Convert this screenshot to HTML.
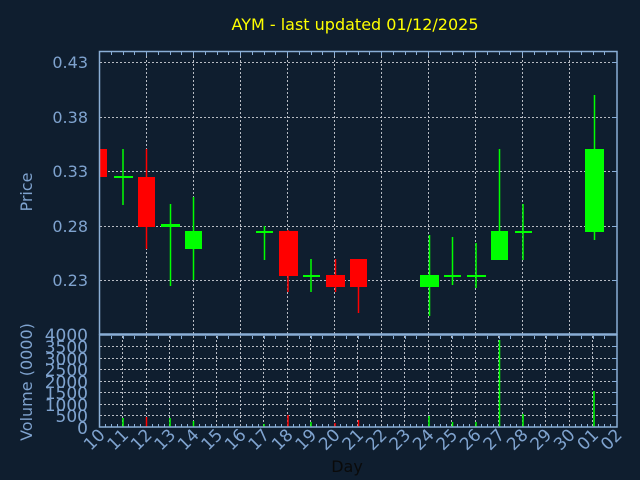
<!DOCTYPE html>
<html><head><meta charset="utf-8"><style>
html,body{margin:0;padding:0;background:#0f1e2f;}
svg{display:block;}
text{font-family:"DejaVu Sans","Liberation Sans",sans-serif;}
</style></head><body>
<svg width="640" height="480" viewBox="0 0 640 480" xmlns="http://www.w3.org/2000/svg">
<rect width="640" height="480" fill="#0f1e2f"/>
<text x="355" y="30" fill="#ffff00" font-size="16" text-anchor="middle">AYM - last updated 01/12/2025</text>

<g stroke="#b8bcc4" stroke-width="1" stroke-dasharray="2,2">
<line x1="100" y1="62.5" x2="617" y2="62.5"/>
<line x1="100" y1="117.5" x2="617" y2="117.5"/>
<line x1="100" y1="171.5" x2="617" y2="171.5"/>
<line x1="100" y1="226.5" x2="617" y2="226.5"/>
<line x1="100" y1="280.5" x2="617" y2="280.5"/>
<line x1="146.5" y1="52" x2="146.5" y2="334"/>
<line x1="193.5" y1="52" x2="193.5" y2="334"/>
<line x1="240.5" y1="52" x2="240.5" y2="334"/>
<line x1="287.5" y1="52" x2="287.5" y2="334"/>
<line x1="334.5" y1="52" x2="334.5" y2="334"/>
<line x1="381.5" y1="52" x2="381.5" y2="334"/>
<line x1="428.5" y1="52" x2="428.5" y2="334"/>
<line x1="475.5" y1="52" x2="475.5" y2="334"/>
<line x1="522.5" y1="52" x2="522.5" y2="334"/>
<line x1="569.5" y1="52" x2="569.5" y2="334"/>
<line x1="100" y1="346.5" x2="617" y2="346.5"/>
<line x1="100" y1="358.5" x2="617" y2="358.5"/>
<line x1="100" y1="369.5" x2="617" y2="369.5"/>
<line x1="100" y1="381.5" x2="617" y2="381.5"/>
<line x1="100" y1="392.5" x2="617" y2="392.5"/>
<line x1="100" y1="404.5" x2="617" y2="404.5"/>
<line x1="100" y1="415.5" x2="617" y2="415.5"/>
<line x1="122.5" y1="336" x2="122.5" y2="427"/>
<line x1="146.5" y1="336" x2="146.5" y2="427"/>
<line x1="169.5" y1="336" x2="169.5" y2="427"/>
<line x1="193.5" y1="336" x2="193.5" y2="427"/>
<line x1="216.5" y1="336" x2="216.5" y2="427"/>
<line x1="240.5" y1="336" x2="240.5" y2="427"/>
<line x1="263.5" y1="336" x2="263.5" y2="427"/>
<line x1="287.5" y1="336" x2="287.5" y2="427"/>
<line x1="310.5" y1="336" x2="310.5" y2="427"/>
<line x1="334.5" y1="336" x2="334.5" y2="427"/>
<line x1="357.5" y1="336" x2="357.5" y2="427"/>
<line x1="381.5" y1="336" x2="381.5" y2="427"/>
<line x1="404.5" y1="336" x2="404.5" y2="427"/>
<line x1="428.5" y1="336" x2="428.5" y2="427"/>
<line x1="451.5" y1="336" x2="451.5" y2="427"/>
<line x1="475.5" y1="336" x2="475.5" y2="427"/>
<line x1="498.5" y1="336" x2="498.5" y2="427"/>
<line x1="522.5" y1="336" x2="522.5" y2="427"/>
<line x1="545.5" y1="336" x2="545.5" y2="427"/>
<line x1="569.5" y1="336" x2="569.5" y2="427"/>
<line x1="592.5" y1="336" x2="592.5" y2="427"/>
</g>

<g stroke-width="1.5">
<rect x="100" y="149" width="7" height="28" fill="#ff0000"/>
<line x1="123" y1="149" x2="123" y2="205" stroke="#00ff00"/>
<rect x="114" y="176" width="19" height="2" fill="#00ff00"/>
<line x1="146.5" y1="149" x2="146.5" y2="249" stroke="#ff0000"/>
<rect x="138" y="177" width="17" height="50" fill="#ff0000"/>
<line x1="170.5" y1="204" x2="170.5" y2="286" stroke="#00ff00"/>
<rect x="161" y="224" width="19" height="3" fill="#00ff00"/>
<line x1="193.5" y1="197" x2="193.5" y2="280" stroke="#00ff00"/>
<rect x="185" y="231" width="17" height="18" fill="#00ff00"/>
<line x1="264.5" y1="226" x2="264.5" y2="260" stroke="#00ff00"/>
<rect x="256" y="231" width="17" height="2" fill="#00ff00"/>
<line x1="288" y1="230" x2="288" y2="292" stroke="#ff0000"/>
<rect x="279" y="231" width="19" height="45" fill="#ff0000"/>
<line x1="311" y1="259" x2="311" y2="292" stroke="#00ff00"/>
<rect x="303" y="275" width="17" height="2" fill="#00ff00"/>
<line x1="335.5" y1="259" x2="335.5" y2="292" stroke="#ff0000"/>
<rect x="326" y="275" width="19" height="12" fill="#ff0000"/>
<line x1="358.5" y1="259" x2="358.5" y2="313" stroke="#ff0000"/>
<rect x="350" y="259" width="17" height="28" fill="#ff0000"/>
<line x1="429.5" y1="235" x2="429.5" y2="316" stroke="#00ff00"/>
<rect x="420" y="275" width="19" height="12" fill="#00ff00"/>
<line x1="452.5" y1="237" x2="452.5" y2="285" stroke="#00ff00"/>
<rect x="444" y="275" width="17" height="2" fill="#00ff00"/>
<line x1="476" y1="243" x2="476" y2="288" stroke="#00ff00"/>
<rect x="467" y="275" width="19" height="2" fill="#00ff00"/>
<line x1="499.5" y1="149" x2="499.5" y2="260" stroke="#00ff00"/>
<rect x="491" y="231" width="17" height="29" fill="#00ff00"/>
<line x1="523" y1="204" x2="523" y2="260" stroke="#00ff00"/>
<rect x="515" y="231" width="17" height="2" fill="#00ff00"/>
<line x1="594.5" y1="95" x2="594.5" y2="240" stroke="#00ff00"/>
<rect x="585" y="149" width="19" height="83" fill="#00ff00"/>
</g>

<g stroke-width="1.5">
<line x1="123" y1="427" x2="123" y2="418" stroke="#00ff00"/>
<line x1="146.5" y1="427" x2="146.5" y2="417" stroke="#ff0000"/>
<line x1="170" y1="427" x2="170" y2="418" stroke="#00ff00"/>
<line x1="193.5" y1="427" x2="193.5" y2="421" stroke="#00ff00"/>
<line x1="264" y1="427" x2="264" y2="424" stroke="#00ff00"/>
<line x1="288" y1="427" x2="288" y2="415" stroke="#ff0000"/>
<line x1="311" y1="427" x2="311" y2="422" stroke="#00ff00"/>
<line x1="335" y1="427" x2="335" y2="423" stroke="#ff0000"/>
<line x1="358.5" y1="427" x2="358.5" y2="420" stroke="#ff0000"/>
<line x1="429" y1="427" x2="429" y2="416" stroke="#00ff00"/>
<line x1="452.5" y1="427" x2="452.5" y2="422" stroke="#00ff00"/>
<line x1="476" y1="427" x2="476" y2="422" stroke="#00ff00"/>
<line x1="499.5" y1="427" x2="499.5" y2="340" stroke="#00ff00"/>
<line x1="523" y1="427" x2="523" y2="414" stroke="#00ff00"/>
<line x1="594" y1="427" x2="594" y2="391" stroke="#00ff00"/>
</g>

<g stroke="#8aaed6" stroke-width="1.5" fill="none">
<rect x="99.5" y="51.5" width="517.5" height="282.5"/>
<rect x="99.5" y="335" width="517.5" height="92"/>
</g>
<g stroke="#8aaed6" stroke-width="1">
<path d="M111.5 52v3M123.5 52v3M134.5 52v3M146.5 52v4M158.5 52v3M170.5 52v3M181.5 52v3M193.5 52v4M205.5 52v3M217.5 52v3M228.5 52v3M240.5 52v4M252.5 52v3M264.5 52v3M275.5 52v3M287.5 52v4M299.5 52v3M311.5 52v3M322.5 52v3M334.5 52v4M346.5 52v3M358.5 52v3M369.5 52v3M381.5 52v4M393.5 52v3M405.5 52v3M416.5 52v3M428.5 52v4M440.5 52v3M452.5 52v3M463.5 52v3M475.5 52v4M487.5 52v3M499.5 52v3M510.5 52v3M522.5 52v4M534.5 52v3M546.5 52v3M557.5 52v3M569.5 52v4M581.5 52v3M593.5 52v3M604.5 52v3"/>
<path d="M612 62.5h5M612 117.5h5M612 171.5h5M612 226.5h5M612 280.5h5"/>
<path d="M111.5 336v3M123.5 336v3M134.5 336v3M158.5 336v3M170.5 336v3M181.5 336v3M205.5 336v3M217.5 336v3M228.5 336v3M252.5 336v3M264.5 336v3M275.5 336v3M299.5 336v3M311.5 336v3M322.5 336v3M346.5 336v3M358.5 336v3M369.5 336v3M393.5 336v3M405.5 336v3M416.5 336v3M440.5 336v3M452.5 336v3M463.5 336v3M487.5 336v3M499.5 336v3M510.5 336v3M534.5 336v3M546.5 336v3M557.5 336v3M581.5 336v3M593.5 336v3M604.5 336v3"/>
<path d="M105.5 427v-3M111.5 427v-3M117.5 427v-3M128.5 427v-3M134.5 427v-3M140.5 427v-3M152.5 427v-3M158.5 427v-3M164.5 427v-3M175.5 427v-3M181.5 427v-3M187.5 427v-3M199.5 427v-3M205.5 427v-3M211.5 427v-3M222.5 427v-3M228.5 427v-3M234.5 427v-3M246.5 427v-3M252.5 427v-3M258.5 427v-3M269.5 427v-3M275.5 427v-3M281.5 427v-3M293.5 427v-3M299.5 427v-3M305.5 427v-3M316.5 427v-3M322.5 427v-3M328.5 427v-3M340.5 427v-3M346.5 427v-3M352.5 427v-3M363.5 427v-3M369.5 427v-3M375.5 427v-3M387.5 427v-3M393.5 427v-3M399.5 427v-3M410.5 427v-3M416.5 427v-3M422.5 427v-3M434.5 427v-3M440.5 427v-3M446.5 427v-3M457.5 427v-3M463.5 427v-3M469.5 427v-3M481.5 427v-3M487.5 427v-3M493.5 427v-3M504.5 427v-3M510.5 427v-3M516.5 427v-3M528.5 427v-3M534.5 427v-3M540.5 427v-3M551.5 427v-3M557.5 427v-3M563.5 427v-3M575.5 427v-3M581.5 427v-3M587.5 427v-3M598.5 427v-3M604.5 427v-3M610.5 427v-3"/>
<path d="M612 346.5h5M612 358.5h5M612 369.5h5M612 381.5h5M612 392.5h5M612 404.5h5M612 415.5h5"/>
</g>

<g fill="#7fa3cf" font-size="16" text-anchor="end">
<text x="88" y="68">0.43</text>
<text x="88" y="123">0.38</text>
<text x="88" y="177">0.33</text>
<text x="88" y="232">0.28</text>
<text x="88" y="286">0.23</text>
</g>
<g fill="#7fa3cf" font-size="17" text-anchor="end">
<text x="88" y="341">4000</text>
<text x="88" y="353">3500</text>
<text x="88" y="365">3000</text>
<text x="88" y="376">2500</text>
<text x="88" y="388">2000</text>
<text x="88" y="399">1500</text>
<text x="88" y="411">1000</text>
<text x="88" y="422">500</text>
<text x="88" y="434">0</text>
</g>
<g fill="#7fa3cf" font-size="16" text-anchor="middle">
<text transform="translate(32,192) rotate(-90)">Price</text>
<text transform="translate(32,382) rotate(-90)">Volume (0000)</text>
</g>

<g fill="#7fa3cf" font-size="17" text-anchor="end">
<text transform="translate(106,436) rotate(-45)">10</text>
<text transform="translate(129.5,436) rotate(-45)">11</text>
<text transform="translate(153,436) rotate(-45)">12</text>
<text transform="translate(176.5,436) rotate(-45)">13</text>
<text transform="translate(200,436) rotate(-45)">14</text>
<text transform="translate(223.5,436) rotate(-45)">15</text>
<text transform="translate(247,436) rotate(-45)">16</text>
<text transform="translate(270.5,436) rotate(-45)">17</text>
<text transform="translate(294,436) rotate(-45)">18</text>
<text transform="translate(317.5,436) rotate(-45)">19</text>
<text transform="translate(341,436) rotate(-45)">20</text>
<text transform="translate(364.5,436) rotate(-45)">21</text>
<text transform="translate(388,436) rotate(-45)">22</text>
<text transform="translate(411.5,436) rotate(-45)">23</text>
<text transform="translate(435,436) rotate(-45)">24</text>
<text transform="translate(458.5,436) rotate(-45)">25</text>
<text transform="translate(482,436) rotate(-45)">26</text>
<text transform="translate(505.5,436) rotate(-45)">27</text>
<text transform="translate(529,436) rotate(-45)">28</text>
<text transform="translate(552.5,436) rotate(-45)">29</text>
<text transform="translate(576,436) rotate(-45)">30</text>
<text transform="translate(599.5,436) rotate(-45)">01</text>
<text transform="translate(623,436) rotate(-45)">02</text>
</g>
<text x="347" y="472" fill="#0a0a0a" font-size="16" text-anchor="middle">Day</text>
</svg>
</body></html>
